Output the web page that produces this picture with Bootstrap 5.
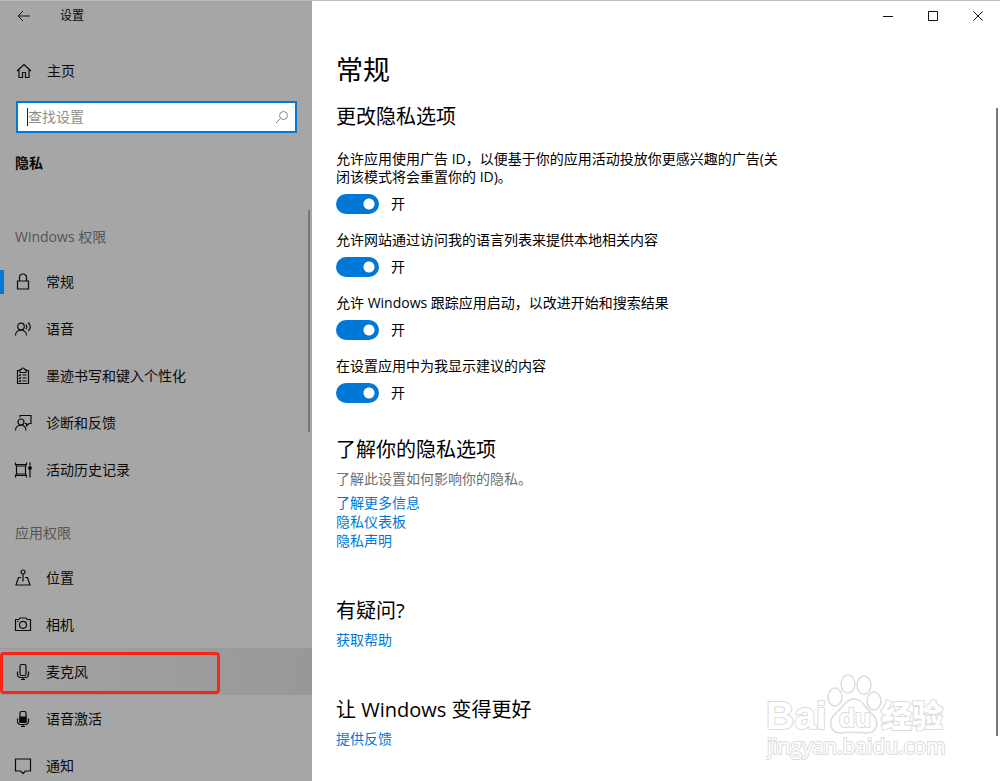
<!DOCTYPE html>
<html lang="zh-CN">
<head>
<meta charset="utf-8">
<meta name="viewport" content="width=device-width, initial-scale=1">
<title>设置</title>
<link href="https://cdn.jsdelivr.net/npm/bootstrap@5.3.0/dist/css/bootstrap.min.css" rel="stylesheet">
<style>
body{font-family:"Open Sans","Noto Sans CJK SC",sans-serif;font-size:14px;line-height:18px;color:#000;background:#fff}
.shell{border-top:1px solid #bdbdbd}
.side{width:31.2%;background:#a6a6a6;box-shadow:0 -1px #858585;color:#0a0a0a}
svg{fill:none;stroke:currentColor;display:block}
.titlebar{height:31px;font-size:12px}
.icon-btn{border:0;background:none;padding:0;color:#111}
.home-link{height:47px;margin-top:16px;padding-left:16px;gap:15px}
.search-box{margin:7px 15px 0 16px;border:2px solid #0078d7;background:#fff;height:32px;padding:0 6px 0 9px}
.search-box .form-control{border:0;padding:0;border-radius:0;font-size:14px;line-height:20px;box-shadow:none;background:none;min-height:0}
.search-box .form-control::placeholder{color:#8f8f8f}
.search-box svg{color:#8a8a8a}
.caret-bar{width:1px;height:18px;background:#222;flex:none}
.area-title{font-size:14px;line-height:18px;font-weight:700;margin:21px 15px 25px}
.group-title{font-size:14px;line-height:20px;font-weight:400;margin:0;padding:30px 15px 11px;color:#555}
.entry{height:47px;padding:2px 0 0 14px;gap:14px;color:inherit;text-decoration:none;position:relative}
.home-link{color:inherit;text-decoration:none}
.entry.active::before{content:"";position:absolute;left:0;top:12px;width:4px;height:24px;background:#0078d7}
.entry.hovered{background:linear-gradient(90deg,#a3a3a3,#989898);box-shadow:inset 0 1px #999,inset 0 -1px #999}
.callout{position:absolute;left:0;top:4px;bottom:1px;width:220px;border:3px solid #fb2516;border-radius:4px}
.thumb{position:absolute;width:2px;background:#777}
.thumb-side{right:2px;top:13px;height:222px}
.thumb-main{right:2px;top:107px;bottom:45px}
.win-btn{width:45px;height:30px;display:grid;place-items:center}
.content-pane{padding:21px 24px 0}
.page-title{font-size:27px;line-height:36px;font-weight:400;margin:0 0 15px}
.sec-title{font-size:20px;line-height:28px;font-weight:400;margin:0}
.options{margin-top:19px;max-width:448px}
.opt-text{display:block}
.form-switch{padding:0;margin:8px 0 17px;min-height:0;gap:12px}
.form-switch .form-check-input{margin:0;width:43px;height:20px;border:0;float:none;background-color:#0078d7;background-image:radial-gradient(circle at 33px 10px,#fff 5px,transparent 6px);background-position:0 0;background-size:auto}
.know{padding-top:16px}
.muted{color:#6f6f6f;margin:6px 0 5px}
.linkset a{color:#0078d7;text-decoration:none;line-height:19px}
.more{margin-top:47px}
.more .sec-title{margin-bottom:5px}
.watermark{position:absolute;right:50px;bottom:18px}
</style>
</head>
<body>
<div class="shell d-flex vh-100 overflow-hidden">
<aside class="side d-flex flex-column flex-shrink-0">
  <header class="titlebar d-flex align-items-center">
    <button class="icon-btn ms-3" aria-label="返回"><svg width="16" height="14"><path d="M2 7h12M7 2L2 7l5 5"/></svg></button>
    <span class="ms-4 ps-1">设置</span>
  </header>
  <a href="#" class="home-link d-flex align-items-center"><svg width="16" height="16" stroke-width="1.2"><path d="M1 8L8 1.500l7 6.500M3 6.500v8h3.500v-5h3v5H13v-8"/></svg><span>主页</span></a>
  <div class="search-box d-flex align-items-center">
    <span class="caret-bar"></span>
    <input class="form-control" type="text" placeholder="查找设置" aria-label="查找设置">
    <svg width="14" height="14" class="flex-shrink-0"><circle cx="8.500" cy="5.500" r="4"/><path d="M5.500 8.500L1 13"/></svg>
  </div>
  <h1 class="area-title">隐私</h1>
  <nav class="position-relative flex-grow-1 overflow-hidden" aria-label="隐私">
    <h2 class="group-title">Windows 权限</h2>
    <a href="#" class="entry active d-flex align-items-center"><svg width="18" height="18" stroke-width="1.200"><path d="M3.500 8h11v8h-11zM5.500 8V4.500a3.500 3.500 0 0 1 7 0V8"/></svg>常规</a>
    <a href="#" class="entry d-flex align-items-center"><svg width="18" height="18" stroke-width="1.200"><circle cx="7" cy="6.500" r="3.300"/><path d="M1.500 15.500c0-7 11-7 11 0M12 4.500q1.500 2.200 0 4.500M14.300 2.500q4 4.500 0 8.500"/></svg>语音</a>
    <a href="#" class="entry d-flex align-items-center"><svg width="18" height="18" stroke-width="1.200"><path d="M6 3.500H3.500v13h11v-13H12M6 5.500v-3h1.500c0-2 3-2 3 0H12v3zM8.500 8h4M8.500 11h4M8.500 14h4M5 8l.8.7L7 7.300M5 11l.8.7L7 10.300M5 14l.8.7L7 13.300"/></svg>墨迹书写和键入个性化</a>
    <a href="#" class="entry d-flex align-items-center"><svg width="18" height="18" stroke-width="1.200"><circle cx="7" cy="8" r="3"/><path d="M1.500 16.500c0-7 10.500-7 10.500 0M6 3.500v-2h11v8h-2l-2.500 2.300V9.500H11"/></svg>诊断和反馈</a>
    <a href="#" class="entry d-flex align-items-center"><svg width="18" height="18" stroke-width="1.200"><path d="M2.500 5h9v8h-9zM1.500 1.500v2L2.500 5M12.500 1.500v2l-1 1.500M1.500 16.500v-2l1-1.500M12.500 16.500v-2l-1-1.500M1.500 3.500h11M1.500 14.500h11M16 1.500v3M16 9v7.500"/><circle cx="16" cy="7" r="1.300" fill="currentColor"/></svg>活动历史记录</a>
    <h2 class="group-title">应用权限</h2>
    <a href="#" class="entry d-flex align-items-center"><svg width="18" height="18" stroke-width="1.200"><circle cx="9" cy="3" r="2"/><path d="M9 5v7.500M7 8.500H4.500L2 16h14l-2.500-7.500H11"/></svg>位置</a>
    <a href="#" class="entry d-flex align-items-center"><svg width="18" height="18" stroke-width="1.200"><path d="M1.500 3.500H5l1-1.500h6l1 1.500h3.500v11h-15zM3 5.500h1.500"/><circle cx="9" cy="8.800" r="3.500"/></svg>相机</a>
    <a href="#" class="entry hovered d-flex align-items-center"><svg width="18" height="18" stroke-width="1.200"><rect x="6" y="1.500" width="6" height="11" rx="1.500"/><path d="M3.500 8.500V11q0 3.500 3 3.500h5q3 0 3-3.500V8.500M9 14.500v2M7 16.500h4"/></svg>麦克风<span class="callout"></span></a>
    <a href="#" class="entry d-flex align-items-center"><svg width="18" height="18" stroke-width="1.200"><rect x="6" y="1.500" width="6" height="11" rx="1.500"/><path d="M6 7h6v5.500H6z" fill="currentColor"/><path d="M3.500 8.500V11q0 3.500 3 3.500h5q3 0 3-3.500V8.500M9 14.500v2M7 16.500h4"/></svg>语音激活</a>
    <a href="#" class="entry d-flex align-items-center"><svg width="18" height="18" stroke-width="1.200"><path d="M1.500 2h15v12h-5L9 16.500 6.500 14h-5z"/></svg>通知</a>
    <span class="thumb thumb-side"></span>
  </nav>
</aside>
<main class="flex-grow-1 position-relative overflow-hidden">
  <div class="d-flex justify-content-end">
    <button class="icon-btn win-btn" aria-label="最小化"><svg width="12" height="12"><path d="M1 6.500h10"/></svg></button>
    <button class="icon-btn win-btn" aria-label="最大化"><svg width="12" height="12"><path d="M1.500 1.500h9v9h-9z"/></svg></button>
    <button class="icon-btn win-btn" aria-label="关闭"><svg width="12" height="12"><path d="M1.500 1.500l9 9M10.500 1.500l-9 9"/></svg></button>
  </div>
  <div class="content-pane">
    <h1 class="page-title">常规</h1>
    <h2 class="sec-title">更改隐私选项</h2>
    <div class="options">
      <label class="opt-text" for="o1">允许应用使用广告 ID，以便基于你的应用活动投放你更感兴趣的广告(关闭该模式将会重置你的 ID)。</label>
      <div class="form-check form-switch d-flex align-items-center"><input class="form-check-input" type="checkbox" role="switch" id="o1" checked><span>开</span></div>
      <label class="opt-text" for="o2">允许网站通过访问我的语言列表来提供本地相关内容</label>
      <div class="form-check form-switch d-flex align-items-center"><input class="form-check-input" type="checkbox" role="switch" id="o2" checked><span>开</span></div>
      <label class="opt-text" for="o3">允许 Windows 跟踪应用启动，以改进开始和搜索结果</label>
      <div class="form-check form-switch d-flex align-items-center"><input class="form-check-input" type="checkbox" role="switch" id="o3" checked><span>开</span></div>
      <label class="opt-text" for="o4">在设置应用中为我显示建议的内容</label>
      <div class="form-check form-switch d-flex align-items-center"><input class="form-check-input" type="checkbox" role="switch" id="o4" checked><span>开</span></div>
    </div>
    <section class="know">
      <h2 class="sec-title">了解你的隐私选项</h2>
      <p class="muted">了解此设置如何影响你的隐私。</p>
      <div class="linkset d-flex flex-column align-items-start"><a href="#">了解更多信息</a><a href="#">隐私仪表板</a><a href="#">隐私声明</a></div>
    </section>
    <section class="linkset more">
      <h2 class="sec-title">有疑问?</h2>
      <a href="#">获取帮助</a>
    </section>
    <section class="linkset more">
      <h2 class="sec-title">让 Windows 变得更好</h2>
      <a href="#">提供反馈</a>
    </section>
  </div>
  <svg class="watermark" width="184" height="92" viewBox="0 0 184 92">
    <g fill="#fff" stroke="#dcdcdc" stroke-width="2">
    <g paint-order="stroke" font-family="Liberation Sans, sans-serif" font-weight="700">
      <text x="0" y="58" font-size="39">Bai</text>
    </g>
    <g stroke-width="1.500"><ellipse cx="69" cy="26" rx="7" ry="9"/><ellipse cx="82" cy="13" rx="7" ry="9"/><ellipse cx="98" cy="14" rx="7" ry="9"/><ellipse cx="108" cy="30" rx="7" ry="9"/>
    <path d="M88 28c9 0 11 9 17 14 10 8 6 20-4 20-8 0-17-2-26 0-11 0-14-12-5-20 7-5 9-14 18-14z"/></g>
    <g paint-order="stroke">
      <text x="73" y="56" font-family="Liberation Sans, sans-serif" font-size="26" font-weight="700">du</text>
      <text x="115" y="56" font-family="Noto Sans CJK SC, sans-serif" font-weight="900" font-size="31">经验</text>
      <text x="1" y="83" font-family="Open Sans, sans-serif" font-size="21">jingyan.baidu.com</text>
    </g>
    </g>
  </svg>
  <span class="thumb thumb-main"></span>
</main>
</div>
<script src="https://cdn.jsdelivr.net/npm/bootstrap@5.3.0/dist/js/bootstrap.bundle.min.js"></script>
</body>
</html>
